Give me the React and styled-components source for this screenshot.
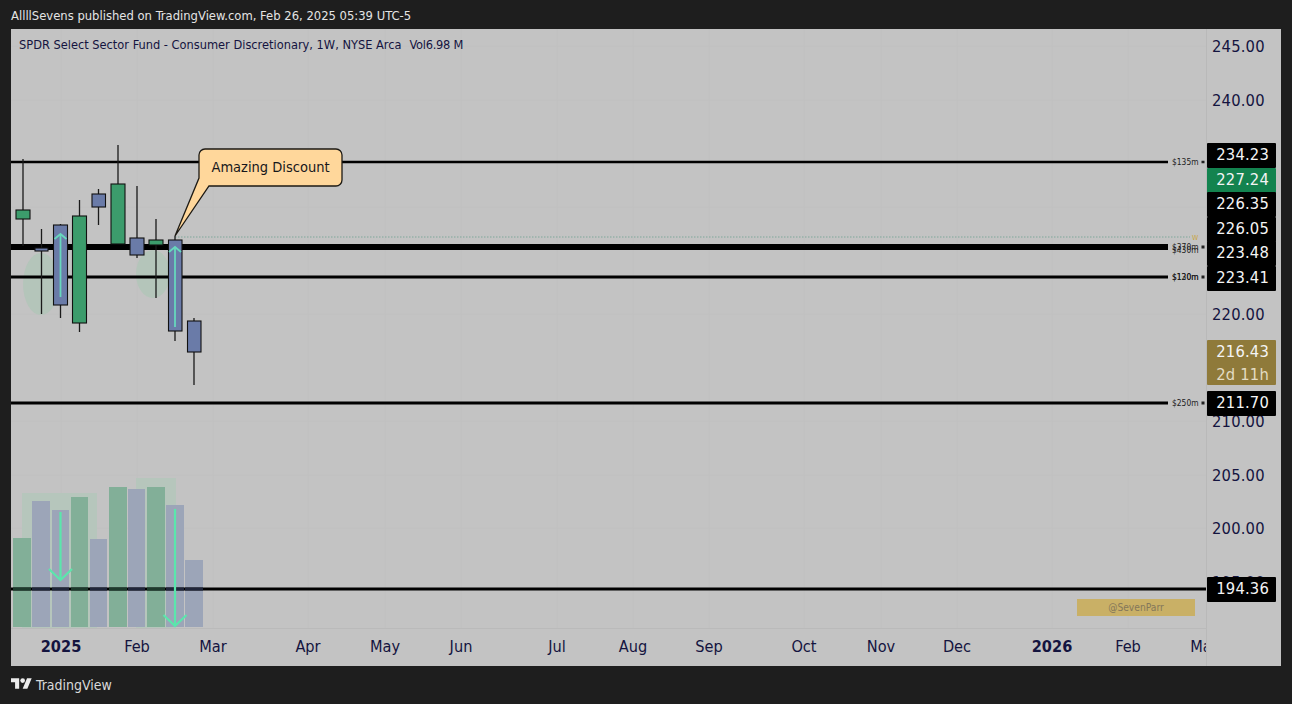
import React from "react";
import styled, { createGlobalStyle } from "styled-components";

const Global = createGlobalStyle`
  html, body { margin: 0; padding: 0; background: #1e1e1e; }
  body { font-family: "DejaVu Sans", "Liberation Sans", sans-serif; font-stretch: condensed; }
`;

const Page = styled.div`
  width: 1292px; height: 704px; background: #1e1e1e; display: flex; flex-direction: column; overflow: hidden;
`;
const TopBar = styled.div`
  height: 29px; padding: 2px 11px 0; display: flex; align-items: center; box-sizing: border-box;
  color: #e4e4e4; font-size: 12.9px; white-space: nowrap;
`;
const Frame = styled.div`
  margin: 0 11px; width: 1270px; height: 637px; background: #c3c3c3;
  display: grid; grid-template-columns: 1195px 75px; grid-template-rows: 599px 38px;
`;
const Plot = styled.div`
  position: relative; overflow: hidden; border-right: 1px solid #b9b9b9; margin-right: -1px;
  border-bottom: 1px solid #bababa; margin-bottom: -1px;
`;
const ChartSvg = styled.svg`display: block; width: 1195px; height: 599px;`;
const Legend = styled.div`
  position: absolute; left: 8px; top: 8px; color: #14143f; font-size: 12.7px; white-space: nowrap;
  display: flex; gap: 8px;
`;
const LegendVolume = styled.span`letter-spacing: -.25px;`;
const CalloutText = styled.div`
  position: absolute; left: 188px; top: 119px; width: 143px; height: 37px; display: flex;
  align-items: center; justify-content: center; color: #17171c; font-size: 14.5px;
`;
const Watermark = styled.div`
  position: absolute; left: 1066px; top: 570px; width: 118px; height: 17px; background: #c9b066;
  color: #84775a; font-size: 10.2px; display: flex; align-items: center; justify-content: center;
`;
const PriceAxis = styled.div`position: relative; overflow: hidden;`;
const Tick = styled.div`
  position: absolute; left: 6px; width: 52px; height: 20px; margin-top: -9px; line-height: 20px;
  color: #14143f; font-size: 16.4px; text-align: right; letter-spacing: .2px; white-space: nowrap;
`;
const Badge = styled.div`
  position: absolute; left: 1px; width: 69px; box-sizing: border-box; padding-right: 7px; height: ${p => p.$h || 24.5}px;
  background: ${p => p.$bg || "#000"}; color: ${p => p.$fg || "#f4f4f4"};
  font-size: 16.4px; letter-spacing: .2px; text-align: right; line-height: 24.5px; border-radius: 1px;
`;
const Dim = styled.div`color: #e3dcc3; line-height: 20px;`;
const TimeAxis = styled.div`position: relative; height: 38px; overflow: hidden;`;
const TimeLabel = styled.div`
  position: absolute; top: 9px; transform: translateX(-50%); color: #14143f; font-size: 16.2px;
  font-weight: ${p => (p.$bold ? 700 : 400)}; white-space: nowrap;
`;
const Corner = styled.div`border-left: 1px solid #b9b9b9;`;
const Footer = styled.div`
  height: 38px; padding: 0 11px; display: flex; align-items: center; gap: 4px; color: #d9d9d9; font-size: 14px; box-sizing: border-box;
`;
const Logo = styled.svg`width: 21px; height: 11px; fill: #ececec; display: block; margin-top: -3px;`;

const G = "#3c9c6c", B = "#6a7ba8";
const candles = [
  [23, 159, 246, 16, 30, 210, 219, G], [41.5, 229, 314, 35, 48, 248, 251, B],
  [60.5, 224, 318, 53.5, 67.5, 225, 305, B], [79.5, 200, 332, 72.5, 86.5, 216, 323, G],
  [98.5, 189, 225, 92, 105.5, 194, 207, B], [118, 145, 244, 111, 125, 184, 244, G],
  [137, 186, 258, 130, 144, 238, 255, B], [156, 219, 298, 149, 163, 240, 245, G],
  [175, 236, 341, 168.5, 182, 240, 331, B], [194, 318, 385, 187.5, 201, 321, 352, B],
];
const volume = [
  [13, 31, 538, G], [32, 50, 501, B], [52, 69, 510, B], [71, 88, 497, G], [90, 107, 539, B],
  [109, 127, 487, G], [128, 145, 489, B], [147, 165, 487, G], [166, 184, 505, B], [185, 203, 560, B],
];
const levels = [[162, 2.5, 1168], [247, 6, 1168], [277, 3, 1168], [403, 3, 1168]];
const levelTags = [[162, "$135m"], [247, "$370m"], [250, "$430m"], [277, "$120m"], [277, "$130m"], [403, "$250m"]];
const gridX = [61, 137, 213, 308, 385, 461, 557, 633, 709, 804, 881, 957, 1052, 1128];
const gridY = [46, 100, 207, 314, 421, 475, 528];
const ticks = [["245.00", 46], ["240.00", 100], ["220.00", 314], ["210.00", 421], ["205.00", 475], ["200.00", 528], ["195.00", 582]];
const badges = [
  ["234.23", 143, "#000"], ["227.24", 168, "#13834f"], ["226.35", 192, "#000"],
  ["226.05", 217, "#000"], ["223.48", 241, "#000"], ["223.41", 266, "#000"],
  ["211.70", 391, "#000"], ["194.36", 577, "#000"],
];
const months = [["2025", 61, true], ["Feb", 137], ["Mar", 213], ["Apr", 308], ["May", 385], ["Jun", 461], ["Jul", 557], ["Aug", 633], ["Sep", 709], ["Oct", 804], ["Nov", 881], ["Dec", 957], ["2026", 1052, true], ["Feb", 1128], ["Mar", 1204]];

const Arrow = ({ x, y1, y2, head, rise, color, width }) => {
  const dir = y2 > y1 ? -1 : 1;
  return (
    <g stroke={color} strokeWidth={width} fill="none">
      <path d={`M${x} ${y1}L${x} ${y2}`} />
      <path d={`M${x - head} ${y2 + dir * rise}L${x} ${y2}L${x + head} ${y2 + dir * rise}`} />
    </g>
  );
};

const Chart = () => (
  <ChartSvg viewBox="11 29 1195 599">
    <g stroke="#c0c0c0" strokeWidth="1">
      {gridX.map(x => <path key={x} d={`M${x} 29V628`} />)}
      {gridY.map(y => <path key={y} d={`M11 ${y}H1206`} />)}
    </g>
    <ellipse cx="41" cy="284" rx="18" ry="31" fill="#b4c5ba" />
    <ellipse cx="153" cy="274" rx="17" ry="24" fill="#b4c5ba" />
    {levels.map(([y, w, end]) => <rect key={y} x="11" y={y - w / 2} width={end - 11} height={w} fill="#000" />)}
    {levelTags.map(([y, t], i) => (
      <text key={i} x="1172" y={y + 2.8} fontSize="8.4" fill="#1c1c1c" fontFamily="DejaVu Sans">{t}</text>
    ))}
    {levels.map(([y, w]) => <rect key={y} x="1201.5" y={y - Math.min(w, 3) / 2} width="3" height={Math.min(w, 3)} fill="#222" />)}
    <path d="M175 237H1190" stroke="#7fa79a" strokeWidth="1" strokeDasharray="1.5 1.5" />
    <text x="1192" y="240" fontSize="7" fill="#c9a53f" fontFamily="DejaVu Sans">W</text>
    <rect x="22" y="493" width="75" height="135" fill="#b3c7ba" opacity=".8" />
    <rect x="136" y="478" width="40" height="150" fill="#b3c7ba" opacity=".8" />
    {volume.map(([a, b, top, c], i) => (
      <rect key={i} x={a} y={top} width={b - a} height={627 - top} fill={c === G ? "#82af98" : "#9ca5b8"} />
    ))}
    <rect x="11" y="587.5" width="1195" height="3" fill="#000" />
    {volume.map(([a, b, , c], i) => (
      <rect key={i} x={a} y="587.5" width={b - a} height="3" fill={c === G ? "#1d3a2c" : "#20263a"} />
    ))}
    {candles.map(([x, wt, wb, l, r, t, b, c], i) => (
      <g key={i}>
        <path d={`M${x} ${wt}V${wb}`} stroke="#1a1a1a" strokeWidth="1.3" />
        <rect x={l} y={t} width={r - l} height={b - t} fill={c} stroke="#111" strokeWidth="1.1" />
      </g>
    ))}
    <Arrow x={60.5} y1={297} y2={234} head={6} rise={5} color="#67d8bd" width={1.8} />
    <Arrow x={175} y1={327} y2={247} head={6} rise={5} color="#67d8bd" width={1.8} />
    <Arrow x={60.5} y1={512} y2={580} head={11.5} rise={11} color="#5be6ac" width={2.2} />
    <Arrow x={175} y1={509} y2={626} head={11.5} rise={11} color="#5be6ac" width={2.2} />
    <path d="M205 149H336a6 6 0 0 1 6 6V180a6 6 0 0 1-6 6H209L175 236L199 178V155a6 6 0 0 1 6-6Z" fill="#ffd79b" stroke="#1d1a14" strokeWidth="1.3" />
  </ChartSvg>
);

export default function App() {
  return (
    <Page>
      <Global />
      <TopBar>AllllSevens published on TradingView.com, Feb 26, 2025 05:39 UTC-5</TopBar>
      <Frame>
        <Plot>
          <Chart />
          <Legend>
            <span>SPDR Select Sector Fund - Consumer Discretionary, 1W, NYSE Arca</span>
            <LegendVolume>Vol6.98 M</LegendVolume>
          </Legend>
          <CalloutText>Amazing Discount</CalloutText>
          <Watermark>@SevenParr</Watermark>
        </Plot>
        <PriceAxis>
          {ticks.map(([t, y]) => <Tick key={t} style={{ top: y - 29 }}>{t}</Tick>)}
          {badges.map(([t, y, bg]) => <Badge key={t} $bg={bg} style={{ top: y - 29 }}>{t}</Badge>)}
          <Badge $bg="#8f7a3a" $h={45} style={{ top: 311 }}>216.43<Dim>2d 11h</Dim></Badge>
        </PriceAxis>
        <TimeAxis>
          {months.map(([t, x, b]) => <TimeLabel key={t + x} $bold={b} style={{ left: x - 11 }}>{t}</TimeLabel>)}
        </TimeAxis>
        <Corner />
      </Frame>
      <Footer>
        <Logo viewBox="0 4 36 18"><path d="M14 22H7V11H0V4h14v18zM28 22h-8l7.5-18h8L28 22z" /><circle cx="20" cy="8" r="4" /></Logo>
        TradingView
      </Footer>
    </Page>
  );
}
